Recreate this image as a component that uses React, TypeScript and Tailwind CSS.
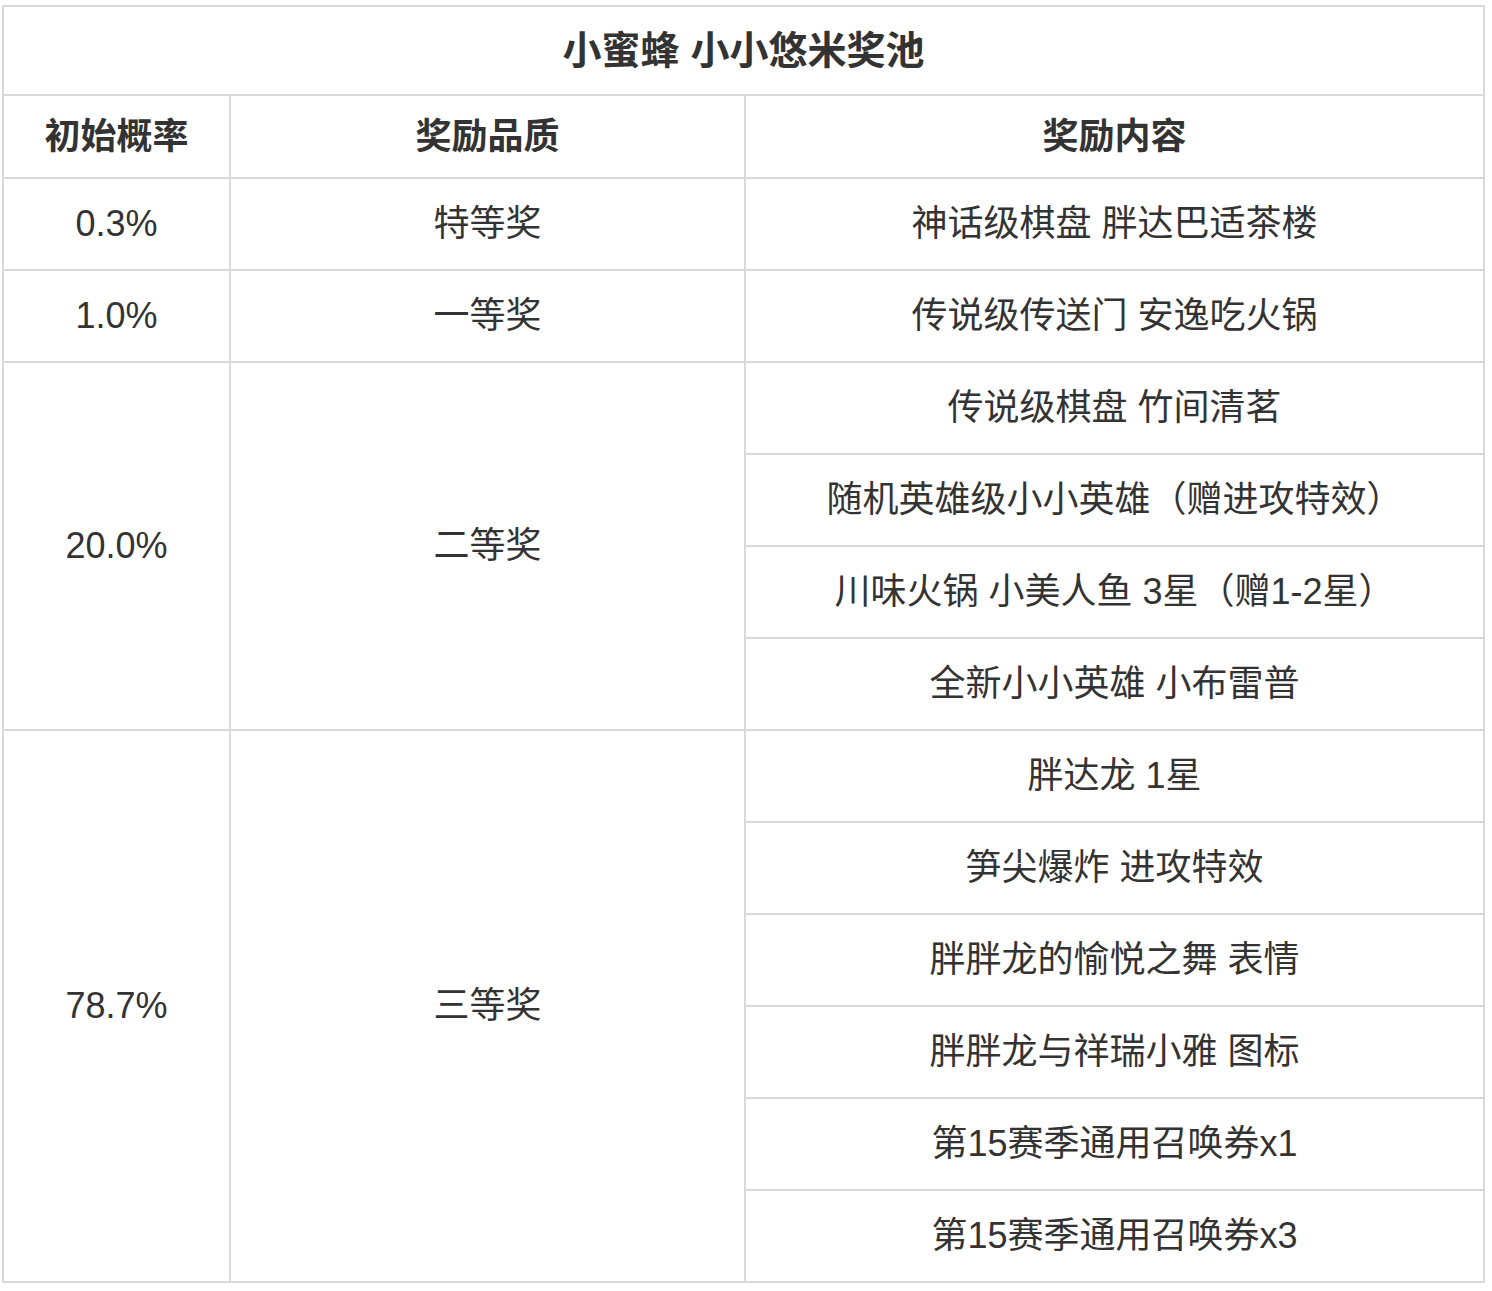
const rows: { rate: string; level: string; items: string[] }[] = [
  { rate: "0.3%", level: "特等奖", items: ["神话级棋盘 胖达巴适茶楼"] },
  { rate: "1.0%", level: "一等奖", items: ["传说级传送门 安逸吃火锅"] },
  {
    rate: "20.0%",
    level: "二等奖",
    items: [
      "传说级棋盘 竹间清茗",
      "随机英雄级小小英雄（赠进攻特效）",
      "川味火锅 小美人鱼 3星（赠1-2星）",
      "全新小小英雄 小布雷普",
    ],
  },
  {
    rate: "78.7%",
    level: "三等奖",
    items: [
      "胖达龙 1星",
      "笋尖爆炸 进攻特效",
      "胖胖龙的愉悦之舞 表情",
      "胖胖龙与祥瑞小雅 图标",
      "第15赛季通用召唤券x1",
      "第15赛季通用召唤券x3",
    ],
  },
];

const cell = "border-2 border-[#d9d9dd] text-center align-middle";

export default function App() {
  return (
    <div className="bg-white min-h-[1291px] pt-[5px] pl-[2px] text-[#333] font-['Liberation_Sans','Noto_Sans_CJK_SC',sans-serif]">
      <table className="w-[1483px] border-collapse table-fixed text-[36px]">
        <colgroup>
          <col className="w-[227px]" />
          <col className="w-[515px]" />
          <col />
        </colgroup>
        <tbody>
          <tr>
            <td colSpan={3} className={`${cell} h-[89px] pt-[2px] font-bold text-[39px]`}>
              小蜜蜂 小小悠米奖池
            </td>
          </tr>
          <tr>
            <td className={`${cell} h-[83px] font-bold`}>初始概率</td>
            <td className={`${cell} font-bold`}>奖励品质</td>
            <td className={`${cell} font-bold`}>奖励内容</td>
          </tr>
          {rows.map((r) =>
            r.items.map((item, i) => (
              <tr key={r.rate + i}>
                {i === 0 && (
                  <>
                    <td rowSpan={r.items.length} className={cell}>
                      {r.rate}
                    </td>
                    <td rowSpan={r.items.length} className={cell}>
                      {r.level}
                    </td>
                  </>
                )}
                <td className={`${cell} h-[92px]`}>{item}</td>
              </tr>
            ))
          )}
        </tbody>
      </table>
    </div>
  );
}
